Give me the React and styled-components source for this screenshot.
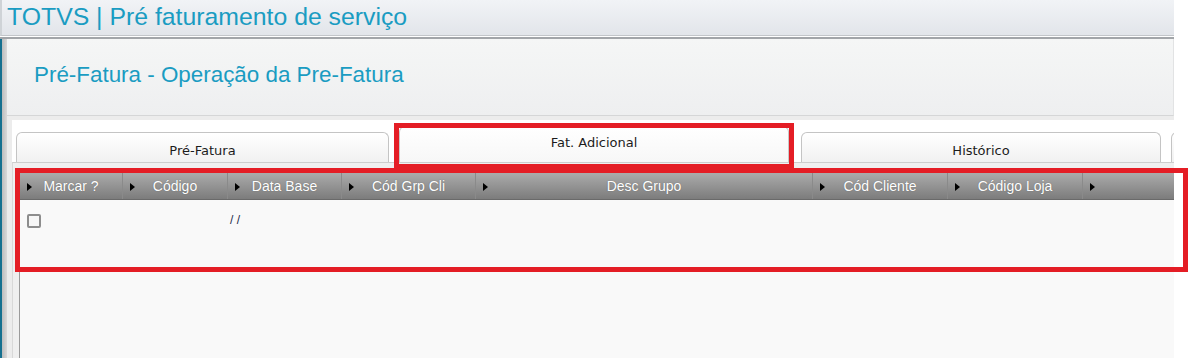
import React from "react";
import styled, { createGlobalStyle } from "styled-components";

const Global = createGlobalStyle`
  html, body { margin: 0; padding: 0; background: #ffffff; }
  body { font-family: "Liberation Sans", Arial, sans-serif; }
`;

const App = styled.div`
  position: relative;
  width: 1188px;
  height: 358px;
  overflow: hidden;
  background: #ffffff;
`;

const Frame = styled.div`
  width: 1174px;
  height: 358px;
  overflow: hidden;
  display: flex;
  flex-direction: column;
`;

const TitleBar = styled.header`
  height: 36px;
  box-sizing: border-box;
  border-left: 2px solid #cfd3d7;
  border-bottom: 1px solid #c2c5c9;
  background: linear-gradient(#f1f3f6, #e2e5ea);
  display: flex;
  align-items: center;
  padding-left: 5px;
  flex: none;
`;

const AppTitle = styled.h1`
  margin: 0;
  font-family: "Liberation Sans", Arial, sans-serif;
  font-weight: normal;
  font-size: 24.8px;
  line-height: 1;
  color: #1a9cc2;
  white-space: nowrap;
  padding-bottom: 1px;
`;

const Divider = styled.div`
  height: 2px;
  margin-top: 1px;
  background: #a2a5a9;
  flex: none;
`;

const Body = styled.div`
  flex: 1;
  display: flex;
  min-height: 0;
`;

const Rail = styled.div`
  width: 7px;
  flex: none;
  background: linear-gradient(to right, #15708f 0, #15708f 2px, #bdbdbd 2px, #d9d9d9 7px);
`;

const Main = styled.main`
  flex: 1;
  display: flex;
  flex-direction: column;
  min-width: 0;
`;

const PageHeader = styled.div`
  height: 76px;
  flex: none;
  box-sizing: border-box;
  border-bottom: 1px solid #d5d6d7;
  border-right: 1px solid #e2e3e4;
  background: linear-gradient(#f5f6f6, #eeeff0);
  display: flex;
  align-items: center;
  padding: 0 0 4px 27px;
  height: 77px;
`;

const PageTitle = styled.h2`
  margin: 0;
  font-family: "Liberation Sans", Arial, sans-serif;
  font-weight: normal;
  font-size: 22.4px;
  line-height: 1;
  color: #1a9cc2;
  white-space: nowrap;
`;

const Workspace = styled.div`
  flex: 1;
  background: #ececec;
  padding: 4px 0 0 5px;
  display: flex;
  flex-direction: column;
  min-height: 0;
`;

const Sheet = styled.section`
  flex: 1;
  background: #ffffff;
  padding-top: 6px;
  display: flex;
  flex-direction: column;
  min-height: 0;
`;

const TabStrip = styled.div`
  height: 36px;
  flex: none;
  display: flex;
  align-items: flex-end;
  padding-left: 4px;
  overflow: hidden;
`;

const Tab = styled.div`
  flex: none;
  width: ${(p) => p.$w}px;
  height: ${(p) => (p.$active ? 36 : 30)}px;
  margin-left: ${(p) => p.$gap || 0}px;
  box-sizing: border-box;
  border: 1px solid ${(p) => (p.$active ? "#c9c9c9" : "#c4c4c4")};
  border-bottom: none;
  border-radius: 6px 6px 0 0;
  background: ${(p) =>
    p.$active ? "linear-gradient(#ffffff, #f7f7f7)" : "linear-gradient(#ffffff, #f1f1f1)"};
  font-family: "DejaVu Sans", Verdana, sans-serif;
  font-size: 13px;
  line-height: 16px;
  color: #1c1c1c;
  text-align: center;
  padding-top: ${(p) => (p.$active ? 8 : 10)}px;
  white-space: nowrap;
`;

const TabPanel = styled.div`
  flex: 1;
  border-top: 1px solid #cdcdcd;
  border-left: 1px solid #d8d8d8;
  background: #efefef;
  padding: 10px 0 0 6px;
  display: flex;
  flex-direction: column;
  min-height: 0;
`;

const Grid = styled.div`
  flex: 1;
  border-left: 1px solid #9a9a9a;
  background: #f9f9f9;
  display: flex;
  flex-direction: column;
`;

const GridHead = styled.div`
  height: 27px;
  flex: none;
  display: flex;
  background: linear-gradient(#ababab, #7c7c7c);
  border-bottom: 1px solid #6a6a6a;
  box-sizing: border-box;
`;

const HeadCell = styled.div`
  position: relative;
  flex: ${(p) => (p.$w ? `0 0 ${p.$w}px` : "1")};
  box-sizing: border-box;
  border-right: 1px solid #8a8a8a;
  display: flex;
  align-items: center;
  justify-content: center;
  font-family: "Liberation Sans", Arial, sans-serif;
  font-size: 14px;
  color: #ffffff;
  text-shadow: 0 0 1px rgba(60, 60, 60, 0.6);
  white-space: nowrap;
  &:last-child { border-right: none; }
`;

const Caret = styled.span`
  position: absolute;
  left: 7px;
  top: 10px;
  width: 0;
  height: 0;
  border-left: 5px solid #000;
  border-top: 4px solid transparent;
  border-bottom: 4px solid transparent;
`;

const Row = styled.div`
  height: 42px;
  display: flex;
  align-items: flex-start;
`;

const Cell = styled.div`
  flex: ${(p) => (p.$w ? `0 0 ${p.$w}px` : "1")};
  box-sizing: border-box;
  padding: ${(p) => p.$pad || "0"};
  font-family: "Liberation Sans", Arial, sans-serif;
  font-size: 12px;
  color: #1c2a4a;
`;

const CheckBox = styled.span`
  display: block;
  width: 14px;
  height: 14px;
  box-sizing: border-box;
  border: 2px solid #8d8d8d;
  border-radius: 2px;
  background: #f6f6f6;
`;

const Highlight = styled.div`
  position: absolute;
  left: ${(p) => p.$x}px;
  top: ${(p) => p.$y}px;
  width: ${(p) => p.$w}px;
  height: ${(p) => p.$h}px;
  box-sizing: border-box;
  border: 5px solid #e41d25;
  pointer-events: none;
`;

const columns = [
  { label: "Marcar ?", w: 103 },
  { label: "Código", w: 105 },
  { label: "Data Base", w: 114 },
  { label: "Cód Grp Cli", w: 134 },
  { label: "Desc Grupo", w: 337 },
  { label: "Cód Cliente", w: 135 },
  { label: "Código Loja", w: 135 },
  { label: "", w: 0 },
];

export default function Page() {
  return (
    <>
      <Global />
      <App>
        <Frame>
          <TitleBar>
            <AppTitle>TOTVS | Pré faturamento de serviço</AppTitle>
          </TitleBar>
          <Divider />
          <Body>
            <Rail />
            <Main>
              <PageHeader>
                <PageTitle>Pré-Fatura - Operação da Pre-Fatura</PageTitle>
              </PageHeader>
              <Workspace>
                <Sheet>
                  <TabStrip>
                    <Tab $w={373}>Pré-Fatura</Tab>
                    <Tab $w={390} $gap={10} $active>
                      Fat. Adicional
                    </Tab>
                    <Tab $w={360} $gap={12}>Histórico</Tab>
                    <Tab $w={200} $gap={10}></Tab>
                  </TabStrip>
                  <TabPanel>
                    <Grid>
                      <GridHead>
                        {columns.map((c, i) => (
                          <HeadCell key={i} $w={c.w}>
                            <Caret />
                            {c.label}
                          </HeadCell>
                        ))}
                      </GridHead>
                      <Row>
                        <Cell $w={103} $pad="14px 0 0 7px">
                          <CheckBox />
                        </Cell>
                        <Cell $w={105} />
                        <Cell $w={114} $pad="13px 0 0 2px">/ /</Cell>
                        <Cell />
                      </Row>
                    </Grid>
                  </TabPanel>
                </Sheet>
              </Workspace>
            </Main>
          </Body>
        </Frame>
        <Highlight $x={394} $y={123} $w={400} $h={46} />
        <Highlight $x={15} $y={168} $w={1173} $h={104} />
      </App>
    </>
  );
}
